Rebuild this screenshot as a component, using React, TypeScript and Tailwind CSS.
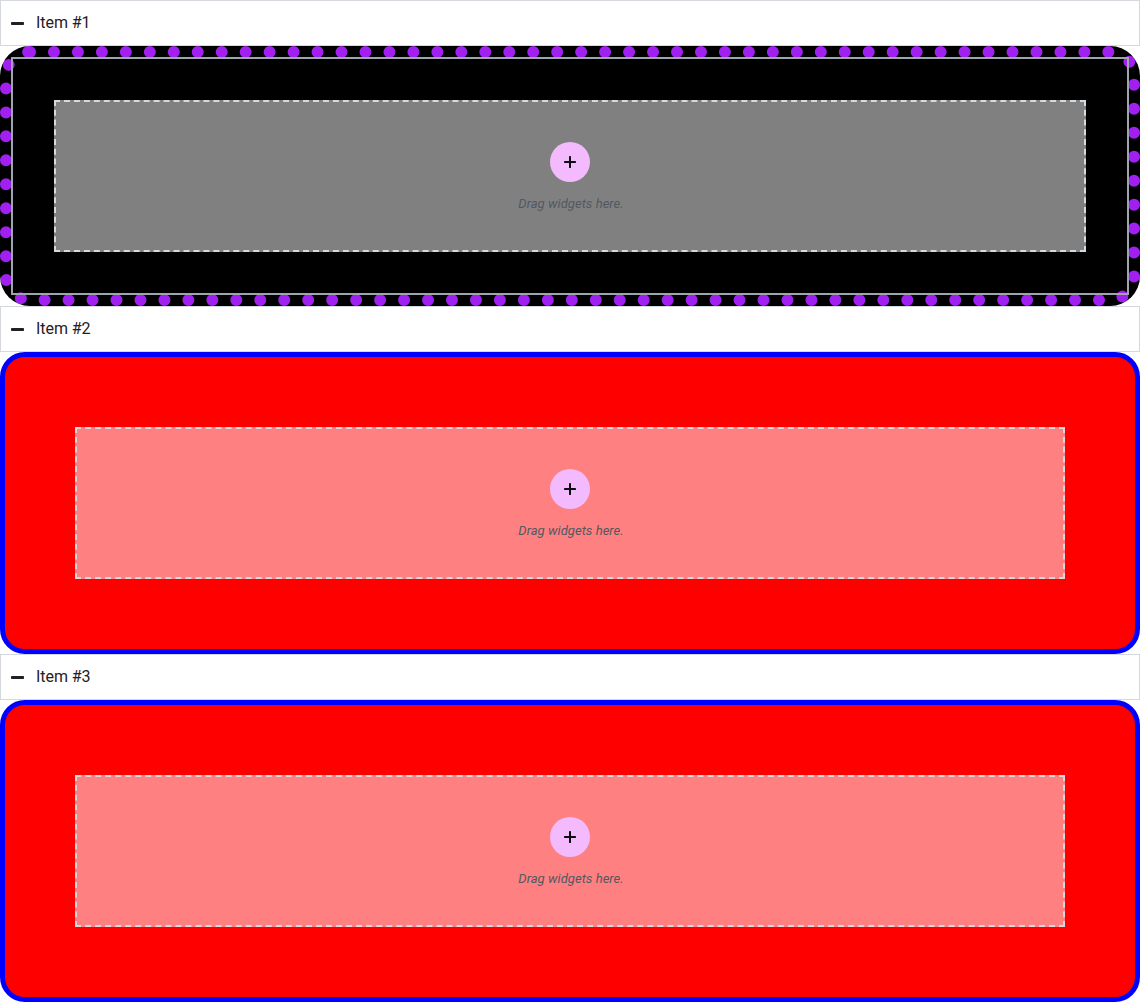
type Item = { title: string; panel: string; outlined?: boolean };

const redPanel = 'rounded-[25px] border-[5px] border-[#0000ff] bg-[#ff0000] p-[70px]';

const items: Item[] = [
  {
    title: 'Item #1',
    panel: 'rounded-[30px] border-[12px] border-dotted border-[#a020f0] bg-black p-[42px]',
    outlined: true,
  },
  { title: 'Item #2', panel: redPanel },
  { title: 'Item #3', panel: redPanel },
];

function DropZone() {
  return (
    <div className="flex h-[152px] flex-col items-center border-2 border-dashed border-[#d5dadf] bg-white/50 pt-10">
      <button
        type="button"
        aria-label="Add widget"
        className="flex size-10 items-center justify-center rounded-full bg-[#f3bafd]"
      >
        <svg width="12" height="12" viewBox="0 0 12 12" fill="#0c0d0e">
          <rect x="5" width="2" height="12" rx="0.4" />
          <rect y="5" width="12" height="2" rx="0.4" />
        </svg>
      </button>
      <p className="mt-3 pl-0.5 text-[13px] leading-5 tracking-[0.05px] italic text-[#515962]">Drag widgets here.</p>
    </div>
  );
}

export default function App() {
  return (
    <main className="w-full bg-white font-['Roboto',sans-serif]">
      {items.map((item) => (
        <section key={item.title}>
          <header className="flex h-[46px] items-center border border-[#d5d8dc] px-2.5">
            <svg width="13" height="3" viewBox="0 0 13 3" className="mt-px" fill="#1f2124">
              <rect width="13" height="3" rx="0.8" />
            </svg>
            <h2 className="ml-3 text-base leading-4 tracking-[-0.06px] text-[#1f2124]">{item.title}</h2>
          </header>
          <div className={`relative ${item.panel}`}>
            {item.outlined && (
              <span className="pointer-events-none absolute -inset-px border-2 border-[#9da5ae]" />
            )}
            <DropZone />
          </div>
        </section>
      ))}
    </main>
  );
}
